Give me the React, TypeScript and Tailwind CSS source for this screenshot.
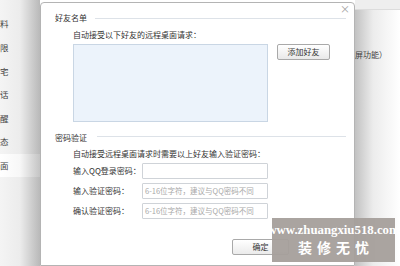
const cn = { fontFamily: '"Noto Sans CJK SC", "Noto Sans", sans-serif' };

const sideItems = ['料', '限', '宅', '话', '醒', '态', '面'];

function PwdRow({ label, placeholder }: { label: string; placeholder?: string }) {
  return (
    <div className="flex items-center h-[20px]">
      <span className="w-[69px] text-[8px] text-[#333] whitespace-nowrap">{label}</span>
      <div className="w-[126px] h-[16px] border border-[#cfd3d8] bg-white rounded-[1px] flex items-center px-[2px] text-[7.5px] text-[#a8a8a8] whitespace-nowrap overflow-hidden">
        {placeholder}
      </div>
    </div>
  );
}

export default function App() {
  return (
    <div className="relative w-[400px] h-[266px] overflow-hidden bg-white flex" style={cn}>
      {/* left settings list, mostly hidden behind dialog */}
      <div className="w-[40px] shrink-0 bg-gradient-to-r from-[#f4f4f4] via-[#ececec] to-[#b9b9b9] flex flex-col pt-[12px]">
        {sideItems.map((t, i) => (
          <div
            key={t}
            className={
              'h-[23.6px] flex items-center ' +
              (i === 6 ? 'bg-gradient-to-r from-white via-[#f7f7f7] to-[#c4c4c4]' : '')
            }
          >
            <span className="text-[8.5px] text-[#444]">{t}</span>
          </div>
        ))}
      </div>

      {/* dialog */}
      <div className="w-[315px] shrink-0 mt-[2px] bg-white border border-[#b4b4b4] rounded-t-[4px] relative">
        <div className="absolute right-[4px] top-[1px] text-[10px] leading-none text-[#a0a0a0]">×</div>

        <div className="pl-[14px] pr-[8px] pt-[9px]">
          <div className="flex items-center gap-[8px]">
            <span className="text-[8px] text-[#333]">好友名单</span>
            <div className="flex-1 h-px bg-[#dde2e8]" />
          </div>

          <div className="pl-[18px] mt-[5px]">
            <div className="text-[8px] text-[#333] leading-[12px]">自动接受以下好友的远程桌面请求：</div>
            <div className="flex gap-[9px] mt-[3px]">
              <div className="w-[195px] h-[78px] bg-[#ecf3fb] border border-[#c9d6e4]" />
              <button className="w-[53px] h-[16px] border border-[#a9a9a9] rounded-[2px] bg-gradient-to-b from-white to-[#e9e9e9] text-[8px] text-[#333] leading-none">
                添加好友
              </button>
            </div>
          </div>

          <div className="flex items-center gap-[10px] mt-[10px]">
            <span className="text-[8px] text-[#333]">密码验证</span>
            <div className="flex-1 h-px bg-[#dde2e8] -mt-[3px]" />
          </div>

          <div className="pl-[18px] mt-[4px]">
            <div className="text-[8px] text-[#333] leading-[12px] whitespace-nowrap">
              自动接受远程桌面请求时需要以上好友输入验证密码：
            </div>
            <div className="mt-[1px]">
              <PwdRow label="输入QQ登录密码：" />
              <PwdRow label="输入验证密码：" placeholder="6-16位字符，建议与QQ密码不同" />
              <PwdRow label="确认验证密码：" placeholder="6-16位字符，建议与QQ密码不同" />
            </div>
          </div>

          <div className="flex mt-[18px] pl-[177px]">
            <button className="w-[57px] h-[16px] border border-[#a9a9a9] rounded-[2px] bg-gradient-to-b from-white to-[#ebebeb] text-[8px] text-[#333] leading-none">
              确定
            </button>
          </div>
        </div>
      </div>

      {/* right background */}
      <div className="flex-1 flex flex-col">
        <div className="h-[10px] bg-[#eeeeee] border-b border-[#dcdcdc]" />
        <div className="flex-1 bg-gradient-to-r from-[#c2c2c2] via-[#ececec] via-40% to-white pt-[29px]">
          <span className="text-[8px] text-[#444] whitespace-nowrap">屏功能）</span>
        </div>
      </div>

      {/* watermark */}
      <div className="absolute left-[272px] top-[218px] w-[123px] h-[44px] bg-[#a59f9b]/95 flex flex-col items-center justify-center text-white">
        <div className="text-[12.8px] font-bold leading-[15px]" style={{ fontFamily: '"Liberation Serif", serif' }}>
          www.zhuangxiu518.com
        </div>
        <div className="text-[14px] font-bold leading-[19px] tracking-[5px] pl-[5px]" style={{ fontFamily: '"Noto Sans CJK SC", serif' }}>
          装修无忧
        </div>
      </div>
    </div>
  );
}
